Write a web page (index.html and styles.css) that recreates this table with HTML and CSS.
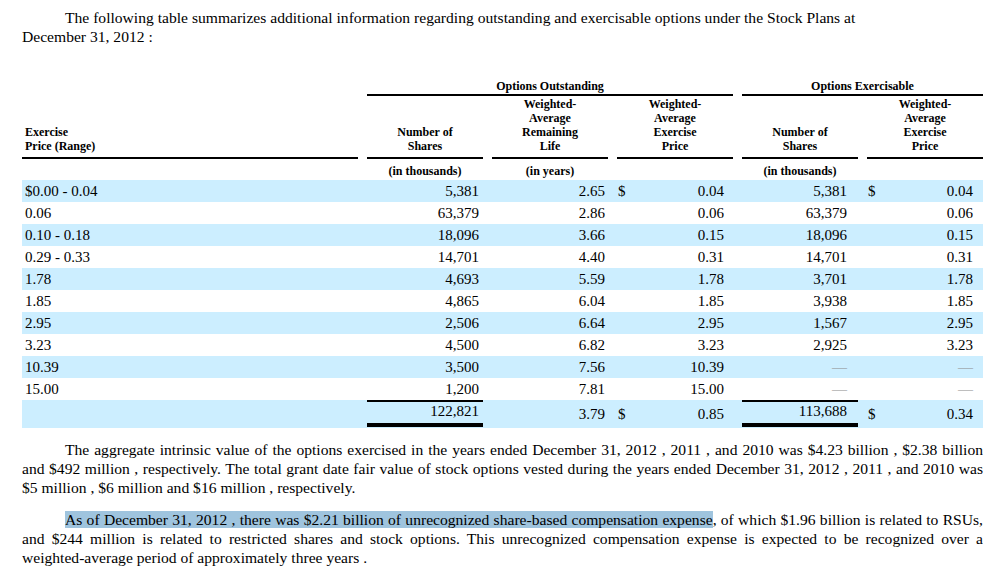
FILE: index.html
```html
<!DOCTYPE html>
<html lang="en">
<head>
  <meta charset="UTF-8">
  <meta name="viewport" content="width=device-width, initial-scale=1.0">
  <title>Stock Plans - Options Outstanding and Exercisable</title>
  <link rel="stylesheet" href="styles.css">
</head>
<body>
  <!-- Intro -->
  <p class="intro">The following table summarizes additional information regarding outstanding and exercisable options under the Stock Plans at<br>December 31, 2012 :</p>

  <!-- Options Table -->
  <table class="options">
    <colgroup>
      <col class="col-range">
      <col class="col-num">
      <col class="col-num">
      <col class="col-num">
      <col class="col-num">
      <col class="col-num">
    </colgroup>
    <thead>
      <tr class="group">
        <th></th>
        <th colspan="3"><div class="rule">Options Outstanding</div></th>
        <th colspan="2"><div class="rule">Options Exercisable</div></th>
      </tr>
      <tr class="heads">
        <th class="first"><div class="rule">Exercise<br>Price (Range)</div></th>
        <th><div class="rule">Number of<br>Shares</div></th>
        <th><div class="rule">Weighted-<br>Average<br>Remaining<br>Life</div></th>
        <th><div class="rule">Weighted-<br>Average<br>Exercise<br>Price</div></th>
        <th><div class="rule">Number of<br>Shares</div></th>
        <th><div class="rule">Weighted-<br>Average<br>Exercise<br>Price</div></th>
      </tr>
      <tr class="units">
        <th></th>
        <th>(in thousands)</th>
        <th>(in years)</th>
        <th></th>
        <th>(in thousands)</th>
        <th></th>
      </tr>
    </thead>
    <tbody>
      <tr>
        <td>$0.00 - 0.04</td>
        <td class="n1">5,381</td>
        <td class="n2">2.65</td>
        <td class="n3"><div class="money"><span>$</span><span>0.04</span></div></td>
        <td class="n4">5,381</td>
        <td class="n5"><div class="money"><span>$</span><span>0.04</span></div></td>
      </tr>
      <tr>
        <td>0.06</td>
        <td class="n1">63,379</td>
        <td class="n2">2.86</td>
        <td class="n3">0.06</td>
        <td class="n4">63,379</td>
        <td class="n5">0.06</td>
      </tr>
      <tr>
        <td>0.10 - 0.18</td>
        <td class="n1">18,096</td>
        <td class="n2">3.66</td>
        <td class="n3">0.15</td>
        <td class="n4">18,096</td>
        <td class="n5">0.15</td>
      </tr>
      <tr>
        <td>0.29 - 0.33</td>
        <td class="n1">14,701</td>
        <td class="n2">4.40</td>
        <td class="n3">0.31</td>
        <td class="n4">14,701</td>
        <td class="n5">0.31</td>
      </tr>
      <tr>
        <td>1.78</td>
        <td class="n1">4,693</td>
        <td class="n2">5.59</td>
        <td class="n3">1.78</td>
        <td class="n4">3,701</td>
        <td class="n5">1.78</td>
      </tr>
      <tr>
        <td>1.85</td>
        <td class="n1">4,865</td>
        <td class="n2">6.04</td>
        <td class="n3">1.85</td>
        <td class="n4">3,938</td>
        <td class="n5">1.85</td>
      </tr>
      <tr>
        <td>2.95</td>
        <td class="n1">2,506</td>
        <td class="n2">6.64</td>
        <td class="n3">2.95</td>
        <td class="n4">1,567</td>
        <td class="n5">2.95</td>
      </tr>
      <tr>
        <td>3.23</td>
        <td class="n1">4,500</td>
        <td class="n2">6.82</td>
        <td class="n3">3.23</td>
        <td class="n4">2,925</td>
        <td class="n5">3.23</td>
      </tr>
      <tr>
        <td>10.39</td>
        <td class="n1">3,500</td>
        <td class="n2">7.56</td>
        <td class="n3">10.39</td>
        <td class="n4 nil">&mdash;</td>
        <td class="n5 nil">&mdash;</td>
      </tr>
      <tr>
        <td>15.00</td>
        <td class="n1">1,200</td>
        <td class="n2">7.81</td>
        <td class="n3">15.00</td>
        <td class="n4 nil">&mdash;</td>
        <td class="n5 nil">&mdash;</td>
      </tr>
      <tr class="total">
        <td></td>
        <td class="sum"><div class="sum-box n1">122,821</div></td>
        <td class="n2">3.79</td>
        <td class="n3"><div class="money"><span>$</span><span>0.85</span></div></td>
        <td class="sum"><div class="sum-box n4">113,688</div></td>
        <td class="n5"><div class="money"><span>$</span><span>0.34</span></div></td>
      </tr>
    </tbody>
  </table>

  <!-- Notes -->
  <p class="note">The aggregate intrinsic value of the options exercised in the years ended December 31, 2012 , 2011 , and 2010 was $4.23 billion , $2.38 billion and $492 million , respectively. The total grant date fair value of stock options vested during the years ended December 31, 2012 , 2011 , and 2010 was $5 million , $6 million and $16 million , respectively.</p>

  <p class="note"><span class="hl">As of December 31, 2012 , there was $2.21 billion of unrecognized share-based compensation expense</span>, of which $1.96 billion is related to RSUs, and $244 million is related to restricted shares and stock options. This unrecognized compensation expense is expected to be recognized over a <span class="nowrap">weighted-average</span> period of approximately three years .</p>
</body>
</html>
```

FILE: styles.css
```css
body {
  font-family: "Liberation Serif", "Times New Roman", serif;
  font-size: 15.6px;
  line-height: 19px;
  color: #000;
  background: #fff;
  margin: 8px 13px 0 22px;
}

/* Paragraphs */
.intro {
  margin: 0;
  text-indent: 43px;
}

.note {
  margin: 12px 0 0;
  text-indent: 43px;
  text-align: justify;
}

.note + .note {
  margin-top: 13px;
}

.hl {
  background-color: #9fc4de;
}

.nowrap {
  white-space: nowrap;
}

/* Table */
.options {
  width: 961px;
  margin-top: 33px;
  border-collapse: collapse;
  border-spacing: 0;
  table-layout: fixed;
  font-size: 15px;
}

.col-range {
  width: 336px;
}

.col-num {
  width: 125px;
}

.options th {
  font-size: 12px;
  font-weight: bold;
  line-height: 14px;
  text-align: center;
  vertical-align: bottom;
  padding: 0 0 0 9px;
}

.options th:first-child {
  padding-left: 0;
}

.options .rule {
  border-bottom: 2px solid #000;
}

.group .rule {
  padding-bottom: 1px;
}

.heads th {
  padding-top: 1px;
}

.heads .rule {
  padding-bottom: 4px;
}

.heads .first {
  text-align: left;
}

.heads .first .rule {
  padding-left: 3px;
}

.options .units th {
  height: 19px;
  vertical-align: middle;
  padding-top: 2px;
}

/* Body rows */
.options td {
  height: 22px;
  padding: 0 0 0 9px;
  line-height: 19px;
  text-align: right;
  vertical-align: middle;
  white-space: nowrap;
}

.options td:first-child {
  padding-left: 3px;
  text-align: left;
}

.options tbody tr:nth-child(odd) {
  background-color: #cceeff;
}

.options td.n1 { padding-right: 4px; }
.options td.n2 { padding-right: 3px; }
.options td.n3 { padding-right: 9px; }
.options td.n4 { padding-right: 11px; }
.options td.n5 { padding-right: 10px; }

.money {
  display: flex;
  justify-content: space-between;
}

.money span:first-child {
  padding-left: 1px;
}

.nil {
  color: #8c8c8c;
}

/* Total row */
.options .total td {
  height: 28px;
}

.options td.sum {
  padding-right: 0;
  vertical-align: top;
}

.sum-box {
  border-top: 2px solid #000;
  border-bottom: 4px solid #000;
  padding-bottom: 2px;
}

.sum-box.n1 { padding-right: 4px; }
.sum-box.n4 { padding-right: 11px; }
```
